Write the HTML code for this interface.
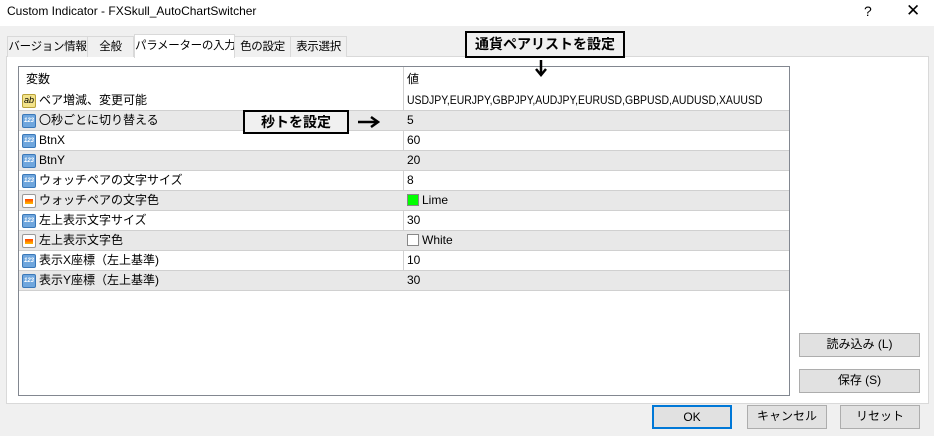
<!DOCTYPE html>
<html><head><meta charset="utf-8"><style>
*{margin:0;padding:0;box-sizing:border-box}
body{width:934px;height:436px;background:#f0f0f0;font-family:"Liberation Sans","Noto Sans CJK JP",sans-serif;font-size:12px;color:#000;position:relative;overflow:hidden}
.a{position:absolute}
.title{left:0;top:0;width:934px;height:26px;background:#fff}
.tab{position:absolute;top:36px;height:21px;border:1px solid #d9d9d9;border-bottom:none;background:#f0f0f0;text-align:center;line-height:20px;font-size:11.5px;white-space:nowrap;overflow:hidden;letter-spacing:-0.3px}
.panel{left:6px;top:56px;width:923px;height:348px;background:#fff;border:1px solid #d9d9d9}
.tbl{left:18px;top:66px;width:772px;height:330px;border:1px solid #828790;background:#fff}
.row{position:absolute;left:0;width:770px;height:20px;border-bottom:1px solid #d0d0d0;line-height:19px;white-space:nowrap}
.row.g{background:#e8e8e8}
.n{position:absolute;left:20px;top:0}
.v{position:absolute;left:388px;top:0}
.ic{position:absolute;left:3px;top:3px;width:14px;height:14px;border-radius:2px}
.i123{background:#6fa6dd;border:1px solid #3b78b8}
.i123:after{content:"123";position:absolute;left:1px;top:3px;font-size:6px;line-height:6px;color:#fff;font-weight:bold}
.icol{background:#fff;border:1px solid #999}
.icol:after{content:"";position:absolute;left:2px;top:4px;width:8px;height:5px;background:linear-gradient(#ff4000,#ffc000)}
.iab{background:#f3e38a;border:1px solid #b9a23a}
.iab:after{content:"ab";position:absolute;left:1px;top:0;font-size:9px;line-height:11px}
.btn{position:absolute;background:#e1e1e1;border:1px solid #adadad;text-align:center;line-height:21px;font-size:12px}
.call{position:absolute;background:#f0f0f0;border:2px solid #000;font-weight:bold;font-size:14px;text-align:center}
</style></head><body>
<div class="a title"></div>
<div class="a" style="left:7px;top:4px;font-size:12px">Custom Indicator - FXSkull_AutoChartSwitcher</div>
<div class="a" style="left:864px;top:3px;font-size:14px">?</div>
<div class="a" style="left:906px;top:1px;font-size:17px">✕</div>
<div class="a panel"></div>
<div class="tab" style="left:7px;width:81px">バージョン情報</div>
<div class="tab" style="left:87px;width:47px">全般</div>
<div class="tab" style="left:134px;top:34px;width:101px;height:24px;background:#fff;line-height:22px">パラメーターの入力</div>
<div class="tab" style="left:234px;width:57px">色の設定</div>
<div class="tab" style="left:290px;width:57px">表示選択</div>
<div class="a tbl">
 <div class="row" style="top:0;height:24px;border-bottom:none;line-height:24px"><span class="n" style="left:7px">変数</span><span class="v">値</span></div>
 <div class="a" style="left:384px;top:0;width:1px;height:224px;background:#d0d0d0"></div>
 <div class="row" style="top:24px"><i class="ic iab"></i><span class="n">ペア増減、変更可能</span><span class="v" style="transform:scaleX(0.87);transform-origin:0 0">USDJPY,EURJPY,GBPJPY,AUDJPY,EURUSD,GBPUSD,AUDUSD,XAUUSD</span></div>
 <div class="row g" style="top:44px"><i class="ic i123"></i><span class="n">〇秒ごとに切り替える</span><span class="v">5</span></div>
 <div class="row" style="top:64px"><i class="ic i123"></i><span class="n">BtnX</span><span class="v">60</span></div>
 <div class="row g" style="top:84px"><i class="ic i123"></i><span class="n">BtnY</span><span class="v">20</span></div>
 <div class="row" style="top:104px"><i class="ic i123"></i><span class="n">ウォッチペアの文字サイズ</span><span class="v">8</span></div>
 <div class="row g" style="top:124px"><i class="ic icol"></i><span class="n">ウォッチペアの文字色</span><span class="v"><i style="display:inline-block;width:12px;height:12px;background:#0f0;border:1px solid #888;vertical-align:-2px;margin-right:3px"></i>Lime</span></div>
 <div class="row" style="top:144px"><i class="ic i123"></i><span class="n">左上表示文字サイズ</span><span class="v">30</span></div>
 <div class="row g" style="top:164px"><i class="ic icol"></i><span class="n">左上表示文字色</span><span class="v"><i style="display:inline-block;width:12px;height:12px;background:#fff;border:1px solid #888;vertical-align:-2px;margin-right:3px"></i>White</span></div>
 <div class="row" style="top:184px"><i class="ic i123"></i><span class="n">表示X座標（左上基準)</span><span class="v">10</span></div>
 <div class="row g" style="top:204px"><i class="ic i123"></i><span class="n">表示Y座標（左上基準)</span><span class="v">30</span></div>
</div>
<div class="call" style="left:465px;top:31px;width:160px;height:27px;line-height:23px">通貨ペアリストを設定</div>
<svg class="a" style="left:533px;top:59px" width="16" height="18"><path d="M8 1V15" stroke="#000" stroke-width="2.5"/><path d="M3 10L8 16L13 10" stroke="#000" stroke-width="2.5" fill="none"/></svg>
<div class="call" style="left:243px;top:110px;width:106px;height:24px;line-height:20px">秒トを設定</div>
<svg class="a" style="left:358px;top:115px" width="22" height="14"><path d="M0 7H19" stroke="#000" stroke-width="2.5"/><path d="M13 2L20 7L13 12" stroke="#000" stroke-width="2.5" fill="none"/></svg>
<div class="btn" style="left:799px;top:333px;width:121px;height:24px">読み込み (L)</div>
<div class="btn" style="left:799px;top:369px;width:121px;height:24px">保存 (S)</div>
<div class="btn" style="left:652px;top:405px;width:80px;height:24px;border:2px solid #0078d7;line-height:20px">OK</div>
<div class="btn" style="left:747px;top:405px;width:80px;height:24px">キャンセル</div>
<div class="btn" style="left:840px;top:405px;width:80px;height:24px">リセット</div>
</body></html>
